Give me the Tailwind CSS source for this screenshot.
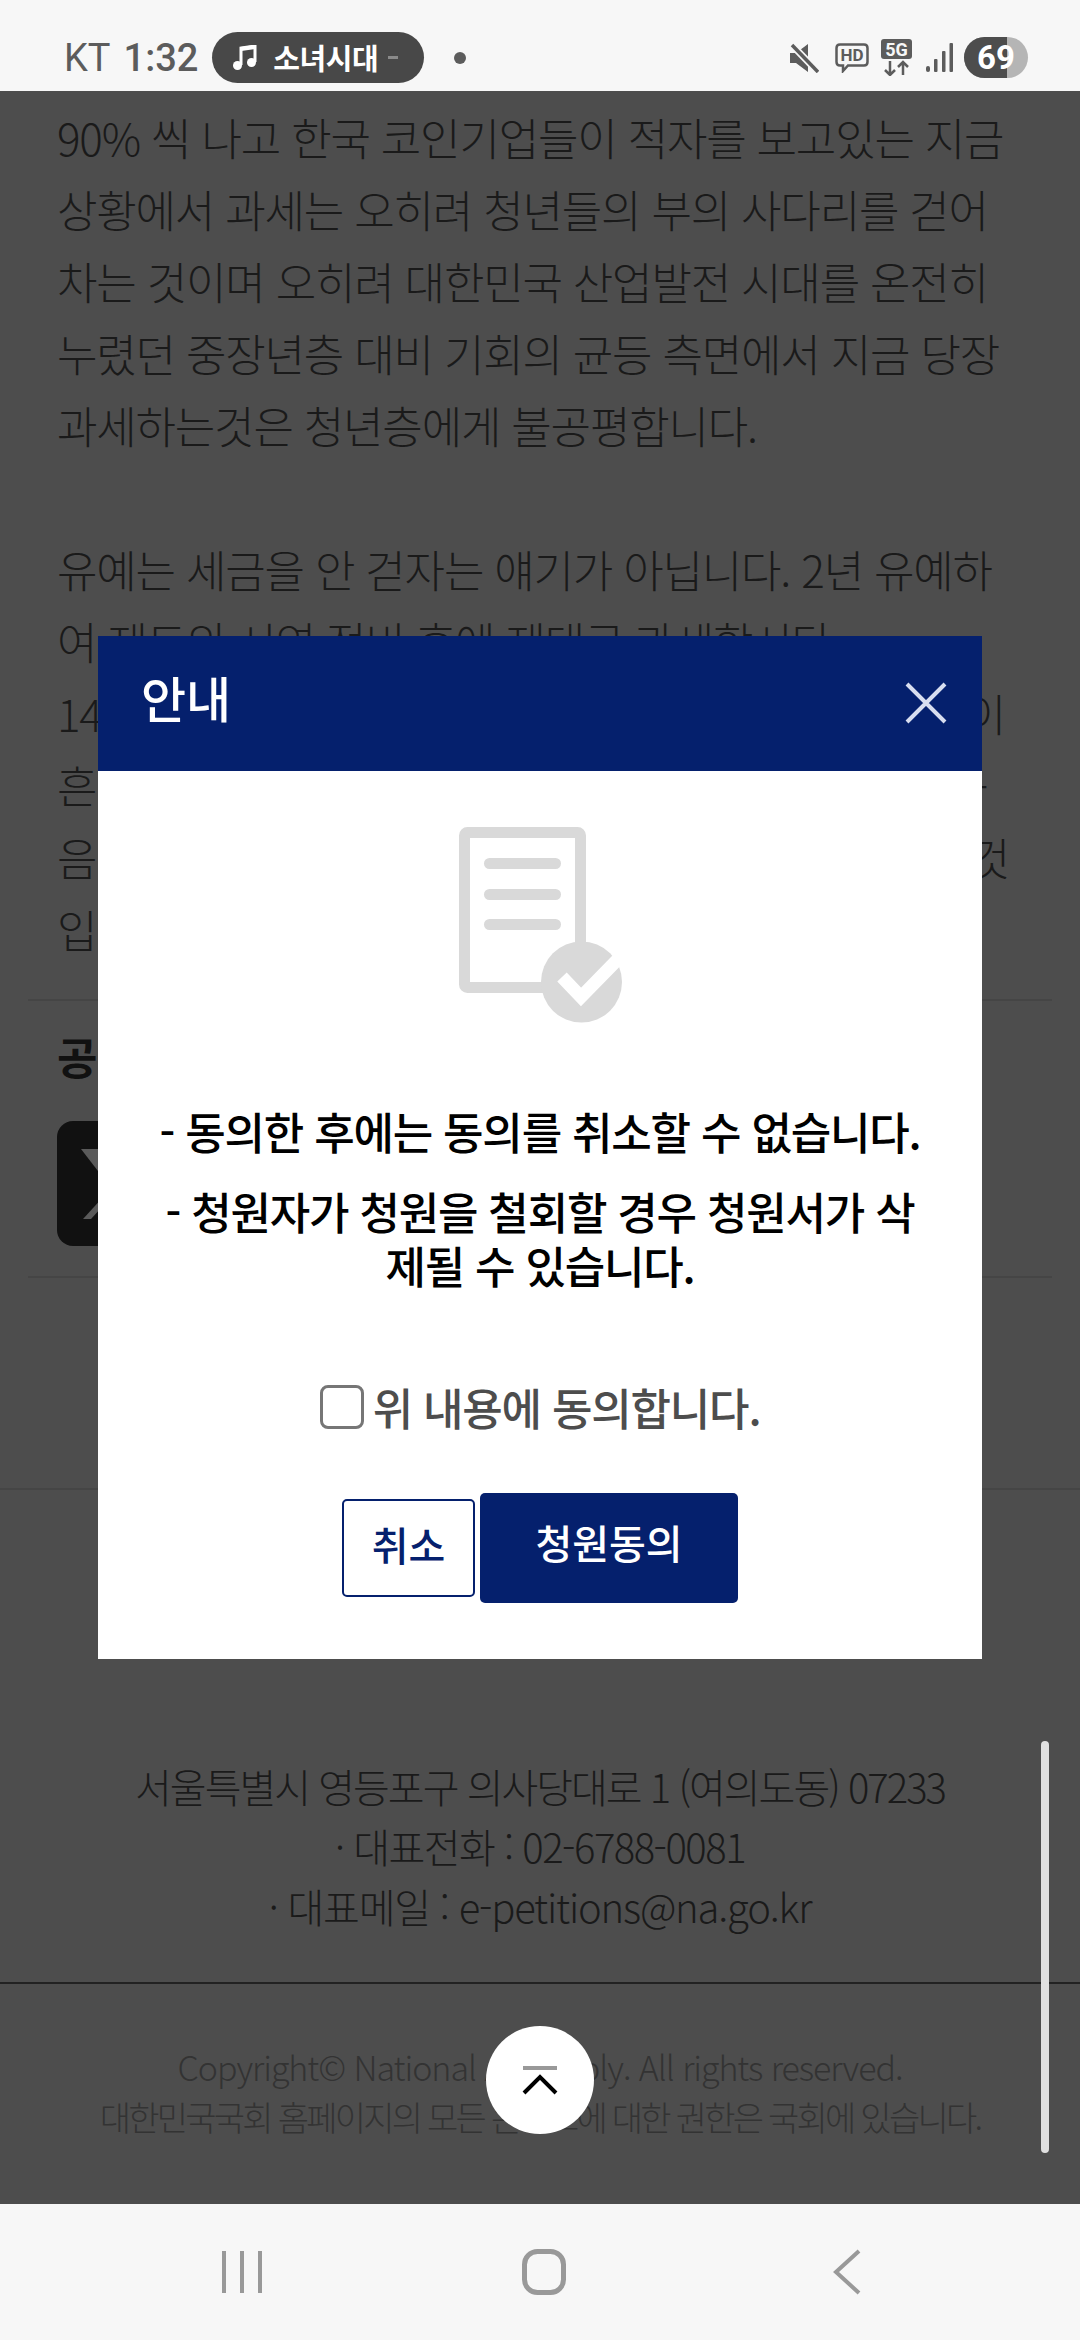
<!DOCTYPE html>
<html lang="ko">
<head>
<meta charset="UTF-8">
<meta name="viewport" content="width=device-width, initial-scale=1.0">
<title>안내</title>
<script src="https://cdn.jsdelivr.net/npm/@tailwindcss/browser@4"></script>
</head>
<body class="bg-[#4d4d4d] font-['Noto_Sans_CJK_KR','Noto_Sans',sans-serif]">
<div class="relative w-[1080px] h-[2340px] overflow-hidden flex flex-col">

    <!-- status bar -->
    <div class="h-[91px] shrink-0 bg-[#f7f7f7] flex items-center pl-[64px] pr-[52px] pt-[24px] text-[#5c5c5c] font-['Roboto',sans-serif]">
        <span class="text-[38px] leading-none">KT</span>
        <span class="text-[38px] leading-none font-medium ml-[13px]">1:32</span>
        <div class="ml-[14px] w-[212px] h-[51px] rounded-[26px] bg-[#484848] flex items-center pl-[21px] text-white">
            <svg width="24" height="25" viewBox="0 0 24 25" fill="none"><path d="M8 20 V3 L22 1 V17" stroke="#fff" stroke-width="3"/><path d="M8 4 L22 2" stroke="#fff" stroke-width="4"/><circle cx="4.5" cy="20.5" r="4.5" fill="#fff"/><circle cx="18.5" cy="17.5" r="4.5" fill="#fff"/></svg>
            <span class="ml-[16px] text-[29px] leading-none font-bold font-['Noto_Sans_CJK_KR',sans-serif] tracking-[-0.5px]">소녀시대</span>
            <span class="ml-[10px] w-[10px] h-[3px] bg-[#8a8a8a]"></span>
        </div>
        <span class="ml-[30px] w-[12px] h-[12px] rounded-full bg-[#5c5c5c]"></span>
        <div class="ml-auto flex items-center">
            <svg width="30" height="30" viewBox="0 0 30 30" fill="#5c5c5c"><path d="M1 10 H7 L19 1 V29 L7 20 H1 Z"/><path d="M3 2 L29 29" stroke="#f7f7f7" stroke-width="7"/><path d="M3 2 L29 29" stroke="#5c5c5c" stroke-width="3.5"/></svg>
            <svg class="ml-[16px]" width="34" height="30" viewBox="0 0 34 30" fill="none"><path d="M5 1.5 H29 Q32.5 1.5 32.5 5 V19 Q32.5 22.5 29 22.5 H13 L8 28 V22.5 H5 Q1.5 22.5 1.5 19 V5 Q1.5 1.5 5 1.5 Z" stroke="#5c5c5c" stroke-width="2.5"/><text x="17" y="18" text-anchor="middle" font-family="Roboto" font-weight="700" font-size="17" fill="#5c5c5c">HD</text></svg>
            <svg class="ml-[12px]" width="31" height="37" viewBox="0 0 31 37" fill="none"><rect x="0" y="0" width="31" height="20" rx="3" fill="#5c5c5c"/><text x="15.5" y="16.5" text-anchor="middle" font-family="Roboto" font-weight="700" font-size="18" fill="#f7f7f7">5G</text><path d="M9 22 V36 M4 31 L9 36 L14 31 M22 36 V23 M17 28 L22 23 L27 28" stroke="#5c5c5c" stroke-width="2.5"/></svg>
            <svg class="ml-[14px]" width="27" height="30" viewBox="0 0 27 30" fill="#5c5c5c"><rect x="0" y="23" width="4" height="6" rx="2"/><rect x="8" y="16" width="3.5" height="13" rx="1"/><rect x="16" y="8" width="3.5" height="21" rx="1"/><rect x="23.5" y="0" width="3.5" height="29" rx="1"/></svg>
            <div class="ml-[11px] w-[64px] h-[41px] rounded-[21px] bg-[#b5b5b5] overflow-hidden relative flex items-center justify-center">
                <div class="absolute left-0 top-0 bottom-0 w-[43px] bg-[#4d4d4d]"></div>
                <span class="relative text-white text-[33px] font-bold leading-none">69</span>
            </div>
        </div>
    </div>

    <!-- page behind the dialog -->
    <div class="flex-1 relative flex flex-col">
        <div class="pl-[57px] pr-[75px] pt-[10px] text-[44px] leading-[72px] tracking-[-1.2px] text-[#1a1a1a] font-light whitespace-nowrap">
            <p>90% 씩 나고 한국 코인기업들이 적자를 보고있는 지금</p>
            <p>상황에서 과세는 오히려 청년들의 부의 사다리를 걷어</p>
            <p>차는 것이며 오히려 대한민국 산업발전 시대를 온전히</p>
            <p>누렸던 중장년층 대비 기회의 균등 측면에서 지금 당장</p>
            <p>과세하는것은 청년층에게 불공평합니다.</p>
            <p>&nbsp;</p>
            <p>유예는 세금을 안 걷자는 얘기가 아닙니다. 2년 유예하</p>
            <p>여 제도의 시연 정비 후에 제대로 과세합시다.</p>
            <p class="flex justify-between"><span>14</span><span>이</span></p>
            <p class="flex justify-between"><span>흔</span><span class="mr-[18px]">-</span></p>
            <p class="flex justify-between"><span>음</span><span class="mr-[-4px]">것</span></p>
            <p>입</p>
        </div>
        <div class="mx-[28px] mt-[34px] border-t-2 border-[#454545] pl-[29px] pt-[25px] h-[277px]">
            <p class="text-[44px] leading-[60px] font-bold text-[#111]">공</p>
            <div class="mt-[35px] w-[124px] h-[125px] rounded-[16px] bg-[#111] flex items-center justify-center">
                <svg width="76" height="70" viewBox="0 0 76 70" fill="#5a5a5a"><path d="M0 0 H22 L76 70 H54 Z"/><path d="M66 0 H74 L10 70 H2 Z"/></svg>
            </div>
        </div>
        <div class="mx-[28px] border-t-2 border-[#454545] h-[212px]"></div>
        <div class="border-t-2 border-[#454545] h-[268px]"></div>
        <div class="text-center text-[40px] leading-[60px] text-[#1a1a1a] font-light">
            <p class="tracking-[-2px]">서울특별시 영등포구 의사당대로 1 (여의도동) 07233</p>
            <p class="tracking-[-1.5px]">· 대표전화 : 02-6788-0081</p>
            <p class="tracking-[-1.2px]">· 대표메일 : e-petitions@na.go.kr</p>
        </div>
        <div class="mt-[46px] border-t-2 border-[#222] pt-[58px] text-center text-[34px] leading-[50px] text-[#333] font-light">
            <p class="tracking-[-1.06px]">Copyright© National Assembly. All rights reserved.</p>
            <p class="tracking-[-2.75px]">대한민국국회 홈페이지의 모든 콘텐츠에 대한 권한은 국회에 있습니다.</p>
        </div>

        <!-- page scrollbar -->
        <div class="absolute left-[1041px] top-[1650px] w-[8px] h-[412px] rounded-full bg-[#e0e0e0]"></div>

        <!-- back to top -->
        <div class="absolute left-[486px] top-[1935px] w-[108px] h-[108px] rounded-full bg-white flex flex-col items-center justify-center">
            <svg width="40" height="40" viewBox="0 0 40 40" fill="none"><path d="M3 8 H37" stroke="#999" stroke-width="4"/><path d="M4 33 L20 17 L36 33" stroke="#000" stroke-width="4"/></svg>
        </div>
    </div>

    <!-- nav bar -->
    <div class="h-[136px] shrink-0 bg-[#f7f7f7] flex items-center pl-[222px] pb-[1px]">
        <svg width="40" height="44" viewBox="0 0 40 44" fill="#999"><rect x="0" y="1" width="4" height="42"/><rect x="18" y="1" width="4" height="42"/><rect x="36" y="1" width="4" height="42"/></svg>
        <svg class="ml-[260px]" width="44" height="46" viewBox="0 0 44 46" fill="none"><rect x="2.5" y="2.5" width="39" height="41" rx="13" stroke="#999" stroke-width="5"/></svg>
        <svg class="ml-[267px]" width="28" height="46" viewBox="0 0 28 46" fill="none"><path d="M26 2 L3 23 L26 44" stroke="#999" stroke-width="4"/></svg>
    </div>

    <!-- dialog -->
    <div class="absolute left-[98px] top-[636px] w-[884px] h-[1023px] bg-white flex flex-col">
        <div class="h-[135px] shrink-0 bg-[#05206d] flex items-center justify-between pl-[43px] pr-[34px] pb-[14px]">
            <span class="text-[49px] leading-none font-medium text-white">안내</span>
            <svg class="mt-[12px]" width="44" height="44" viewBox="0 0 44 44" fill="none"><path d="M3 3 L41 41 M41 3 L3 41" stroke="#d8def0" stroke-width="4"/></svg>
        </div>
        <div class="flex flex-col items-center">
            <svg class="mt-[56px] ml-[4px]" width="166" height="200" viewBox="0 0 166 200" fill="none">
                <rect x="5.5" y="5.5" width="116" height="155" rx="3" stroke="#d9d9d9" stroke-width="11"/>
                <rect x="25" y="31" width="77" height="11" rx="5.5" fill="#d9d9d9"/>
                <rect x="25" y="62" width="77" height="11" rx="5.5" fill="#d9d9d9"/>
                <rect x="25" y="92" width="77" height="11" rx="5.5" fill="#d9d9d9"/>
                <circle cx="122.5" cy="155" r="40.5" fill="#d9d9d9"/>
                <path d="M103 150 L122 170 L163 128" stroke="#fff" stroke-width="13"/>
            </svg>
            <div class="mt-[77px] w-full px-[50px] text-center text-[44px] leading-[54px] font-medium text-black tracking-[-1.2px]">
                <p>- 동의한 후에는 동의를 취소할 수 없습니다.</p>
                <p class="mt-[26px]">- 청원자가 청원을 철회할 경우 청원서가 삭<br>제될 수 있습니다.</p>
            </div>
            <div class="mt-[88px] flex items-center">
                <span class="w-[44px] h-[44px] rounded-[8px] border-[3px] border-[#767676] bg-white"></span>
                <span class="ml-[9px] text-[44px] leading-[54px] text-[#4d4d4d] font-medium tracking-[-1.2px]">위 내용에 동의합니다.</span>
            </div>
            <div class="mt-[59px] flex items-center">
                <button class="w-[133px] h-[98px] rounded-[5px] border-2 border-[#05206d] bg-white text-[40px] font-medium text-[#05206d] pb-[8px]">취소</button>
                <button class="ml-[5px] w-[258px] h-[110px] rounded-[5px] bg-[#05206d] text-[40px] font-medium text-white pb-[12px]">청원동의</button>
            </div>
        </div>
    </div>
</div>
</body>
</html>
